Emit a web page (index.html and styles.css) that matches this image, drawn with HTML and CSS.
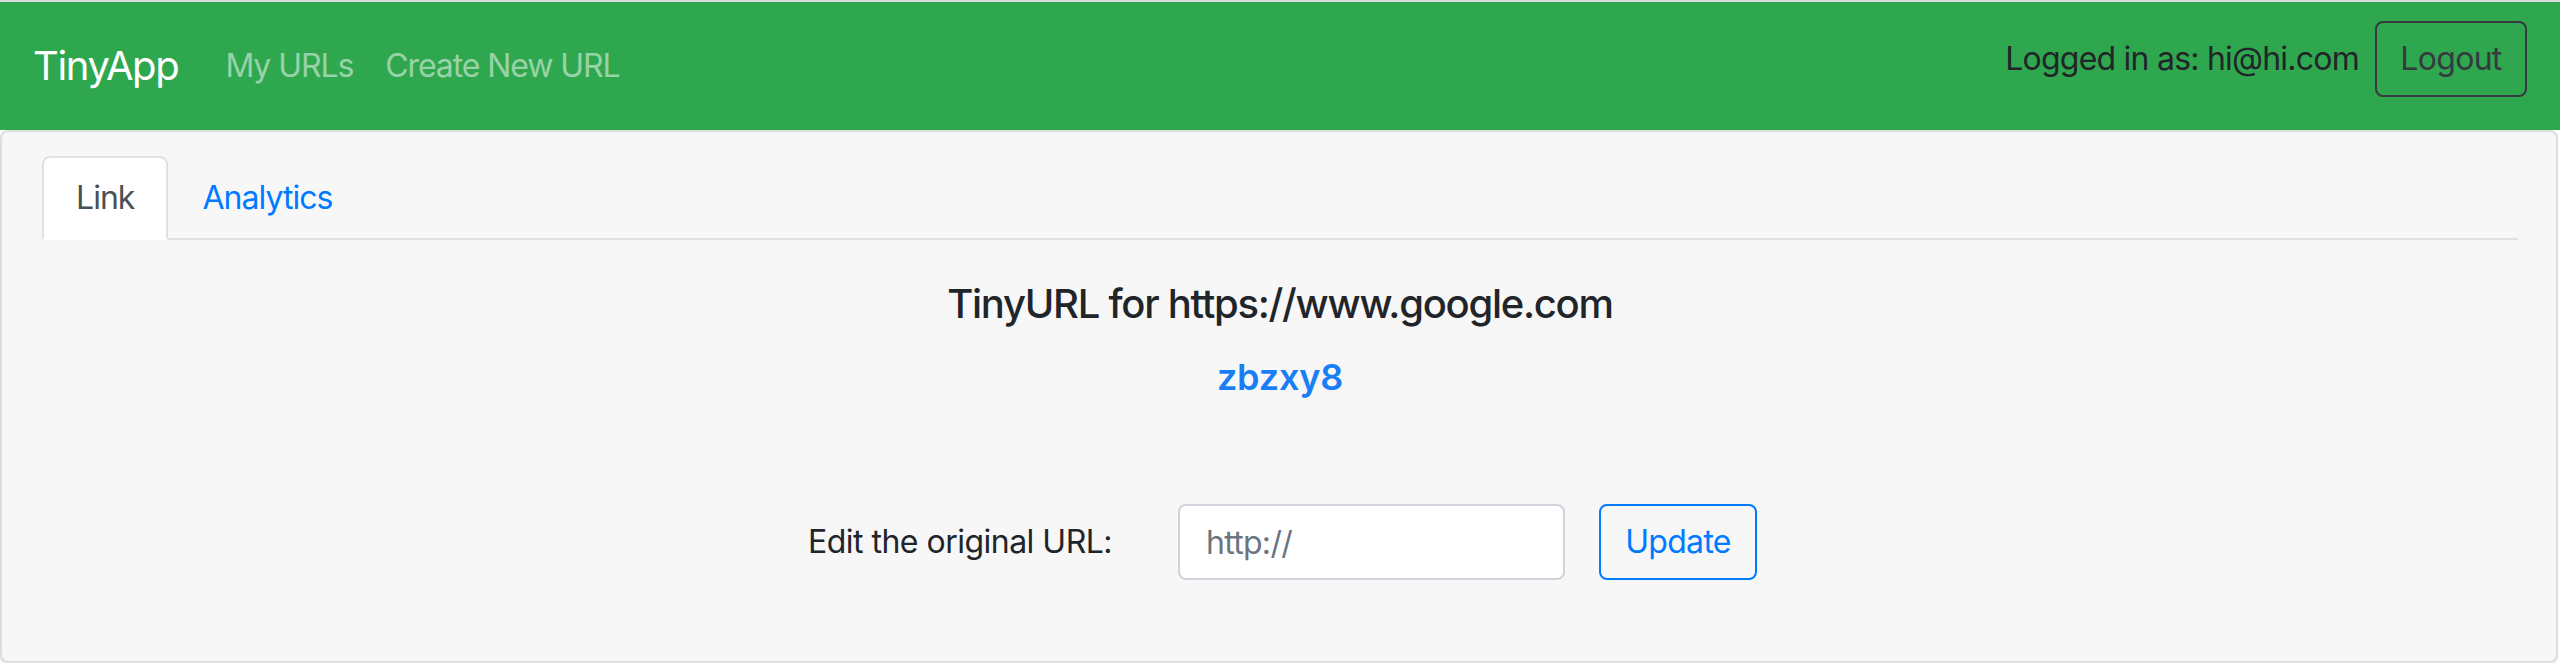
FILE: index.html
```html
<!DOCTYPE html>
<html lang="en">
<head>
<meta charset="utf-8">
<title>TinyApp</title>
<link rel="stylesheet" href="styles.css">
</head>
<body>
<nav class="navbar">
  <a class="brand" href="#">TinyApp</a>
  <ul class="nav-links">
    <li><a href="#">My URLs</a></li>
    <li><a href="#">Create New URL</a></li>
  </ul>
  <div class="user">
    <span class="user-label">Logged in as: hi@hi.com</span>
    <button class="btn btn-dark-outline" type="button">Logout</button>
  </div>
</nav>
<main class="card">
  <ul class="tabs">
    <li><a class="tab active" href="#">Link</a></li>
    <li><a class="tab" href="#">Analytics</a></li>
  </ul>
  <section class="link-panel">
    <h5 class="title">TinyURL for https://www.google.com</h5>
    <a class="short" href="#">zbzxy8</a>
    <form class="edit-form">
      <label class="edit-label" for="longURL">Edit the original URL:</label>
      <input class="edit-input" id="longURL" type="text" placeholder="http://">
      <button class="btn btn-primary-outline" type="submit">Update</button>
    </form>
  </section>
</main>
</body>
</html>
```
FILE: styles.css
```css
* { box-sizing: border-box; }
html, body {
  margin: 0;
  padding: 0;
  background: #ffffff;
  font-family: Inter, "Noto Sans", "Liberation Sans", sans-serif;
  color: #212529;
  letter-spacing: -0.022em;
}
a { text-decoration: none; }

.navbar {
  height: 130px;
  border-top: 2px solid #dadada;
  background: #2fa74e;
  display: flex;
  align-items: center;
  padding: 0 33px 0 33px;
}
.brand {
  font-size: 40px;
  line-height: 60px;
  color: #ffffff;
  margin-right: 31px;
  letter-spacing: -0.034em;
}
.nav-links {
  list-style: none;
  margin: 0;
  padding: 0;
  display: flex;
}
.nav-links a {
  display: block;
  padding: 0 16px;
  font-size: 32px;
  line-height: 48px;
  color: rgba(255, 255, 255, 0.5);
  letter-spacing: -0.034em;
}
.user {
  margin-left: auto;
  display: flex;
  align-items: center;
  gap: 16px;
  margin-bottom: 14px;
}
.user-label {
  font-size: 32px;
  line-height: 48px;
  color: #212529;
  letter-spacing: -0.024em;
}
.btn {
  font-family: inherit;
  font-size: 32px;
  line-height: 48px;
  height: 76px;
  padding: 0 20px;
  border-radius: 8px;
  background: transparent;
  cursor: pointer;
  letter-spacing: -0.022em;
}
.btn-dark-outline {
  border: 2px solid #343a40;
  color: #343a40;
  width: 152px;
}
.btn-primary-outline {
  border: 2px solid #007bff;
  color: #007bff;
  width: 158px;
}

.card {
  display: block;
  height: 533px;
  margin: 0 2px 0 0;
  background: #f7f7f7;
  border: 2px solid #dedede;
  border-radius: 8px;
  box-shadow: 0 2px 2px rgba(0, 0, 0, 0.08);
  padding: 24px 38px 0 40px;
}
.tabs {
  list-style: none;
  margin: 0;
  padding: 0;
  display: flex;
  border-bottom: 2px solid #dee2e6;
}
.tab {
  display: block;
  margin-bottom: -2px;
  padding: 16px 32px;
  font-size: 32px;
  line-height: 48px;
  color: #007bff;
  border: 2px solid transparent;
  border-radius: 8px 8px 0 0;
  letter-spacing: -0.03em;
}
.tab.active {
  color: #495057;
  background: #ffffff;
  border-color: #dee2e6 #dee2e6 #ffffff;
}

.link-panel {
  display: flex;
  flex-direction: column;
  align-items: center;
  padding-top: 40px;
}
.title {
  margin: 0;
  font-size: 40px;
  line-height: 48px;
  font-weight: 500;
  color: #212529;
  letter-spacing: -0.032em;
}
.short {
  margin-top: 28px;
  font-size: 36px;
  line-height: 42px;
  font-weight: 600;
  color: #1a7ff5;
  letter-spacing: -0.005em;
}
.edit-form {
  margin-top: 106px;
  display: flex;
  align-items: center;
  padding-left: 5px;
}
.edit-label {
  font-size: 32px;
  line-height: 48px;
  color: #212529;
  margin-right: 66px;
  letter-spacing: -0.016em;
}
.edit-input {
  width: 387px;
  height: 76px;
  padding: 0 26px;
  border: 2px solid #ced4da;
  border-radius: 8px;
  background: #ffffff;
  font-family: inherit;
  font-size: 32px;
  color: #495057;
  margin-right: 34px;
  letter-spacing: -0.022em;
}
.edit-input::placeholder { color: #6c757d; }
```
